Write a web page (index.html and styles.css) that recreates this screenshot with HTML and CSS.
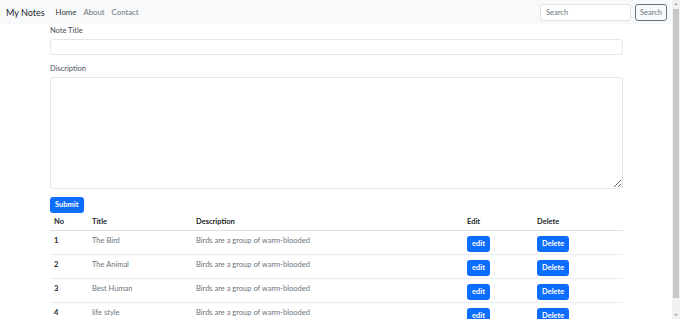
FILE: index.html
```html
<!DOCTYPE html>
<html>
<head>
<meta charset="utf-8">
<link rel="stylesheet" href="styles.css">
</head>
<body>
<nav class="navbar">
  <a class="brand">My Notes</a>
  <ul class="nav-links">
    <li><a class="active">Home</a></li>
    <li><a>About</a></li>
    <li><a>Contact</a></li>
  </ul>
  <form class="search">
    <input class="search-input" type="text" placeholder="Search">
    <button class="btn-outline" type="button">Search</button>
  </form>
</nav>
<main class="container">
  <form class="note-form">
    <label class="label">Note Title</label>
    <input class="field" type="text">
    <label class="label label-desc">Discription</label>
    <textarea class="field area"></textarea>
    <button class="btn btn-submit" type="button">Submit</button>
  </form>
  <table class="notes">
    <thead>
      <tr><th class="c-no">No</th><th class="c-title">Title</th><th class="c-desc">Description</th><th class="c-edit">Edit</th><th>Delete</th></tr>
    </thead>
    <tbody>
      <tr><th>1</th><td>The Bird</td><td>Birds are a group of warm-blooded</td><td><button class="btn">edit</button></td><td><button class="btn">Delete</button></td></tr>
      <tr><th>2</th><td>The Animal</td><td>Birds are a group of warm-blooded</td><td><button class="btn">edit</button></td><td><button class="btn">Delete</button></td></tr>
      <tr><th>3</th><td>Best Human</td><td>Birds are a group of warm-blooded</td><td><button class="btn">edit</button></td><td><button class="btn">Delete</button></td></tr>
      <tr><th>4</th><td>life style</td><td>Birds are a group of warm-blooded</td><td><button class="btn">edit</button></td><td><button class="btn">Delete</button></td></tr>
    </tbody>
  </table>
</main>
<div class="scrollbar"><div class="arrow-up"></div><div class="thumb"></div><div class="arrow-down"></div></div>
</body>
</html>
```
FILE: styles.css
```css
html, body { margin: 0; padding: 0; height: 319px; overflow: hidden; }
body {
  font-family: "Lato", "Noto Sans", sans-serif;
  font-size: 7.5px;
  color: #212529;
  background: #fff;
  width: 672px;
}
.navbar {
  display: flex;
  align-items: center;
  height: 24px;
  background: #f8f9fa;
  padding: 0 5px 0 6px;
  box-sizing: border-box;
}
.brand { font-size: 9px; color: #212529; margin-right: 11px; }
.nav-links { list-style: none; display: flex; gap: 7px; margin: 0; padding: 0; flex: 1; }
.nav-links a { color: #6c757d; font-size: 7.8px; }
.nav-links a.active { color: #343a40; }
.search { display: flex; gap: 4px; }
.search-input {
  width: 91px; height: 17px; box-sizing: border-box;
  border: 1px solid #dee2e6; border-radius: 3px; padding: 0 5px;
  font: inherit; font-size: 7.5px; background: #fff;
}
.search-input::placeholder { color: #6c757d; }
.btn-outline {
  width: 32px; height: 17px; box-sizing: border-box; padding: 0;
  border: 1px solid #6c757d; border-radius: 3px; background: transparent;
  color: #6c757d; font: inherit; font-size: 7.5px;
}
.container { padding: 0 49px 0 50px; }
.note-form { display: flex; flex-direction: column; align-items: flex-start; }
.label { color: #495057; line-height: 13px; height: 15px; }
.field {
  width: 100%; box-sizing: border-box; height: 16px;
  border: 1px solid #e3e6ea; border-radius: 3px; margin: 0; padding: 0;
  background: #fff;
}
.label-desc { margin-top: 7px; }
.area { height: 112px; resize: vertical; display: block; }
.btn {
  background: #0d6efd; color: #fff; border: none; border-radius: 3px;
  font: inherit; font-size: 7.5px; font-weight: 700; height: 16px; padding: 0 5px; line-height: 16px;
  vertical-align: top;
}
.btn-submit { margin-top: 8px; }
.notes { width: 100%; border-collapse: collapse; margin-top: 1px; }
.notes th, .notes td { text-align: left; padding: 5px 4px 0; height: 18px; line-height: 10px; vertical-align: top; border-bottom: 1px solid #e9ecef; }
.notes thead th { height: 16px; padding-top: 0; vertical-align: middle; font-weight: 700; border-bottom-color: #dee2e6; }
.notes td { color: #6c757d; }
.notes tbody th { font-weight: 700; }
.c-no { width: 30px; }
.c-title { width: 96px; }
.c-desc { width: 263px; }
.c-edit { width: 62px; }
.scrollbar {
  position: fixed; top: 0; right: 0; width: 8px; height: 319px; background: #f1f1f1;
}
.thumb { position: absolute; left: 1px; right: 1px; top: 9px; bottom: 21px; background: #c8c8c8; }
.arrow-up { position: absolute; top: 3px; left: 2px; width: 0; height: 0; border-left: 2px solid transparent; border-right: 2px solid transparent; border-bottom: 2px solid #a3a3a3; }
.arrow-down { position: absolute; bottom: 3px; left: 2px; width: 0; height: 0; border-left: 2px solid transparent; border-right: 2px solid transparent; border-top: 2px solid #a3a3a3; }
```
